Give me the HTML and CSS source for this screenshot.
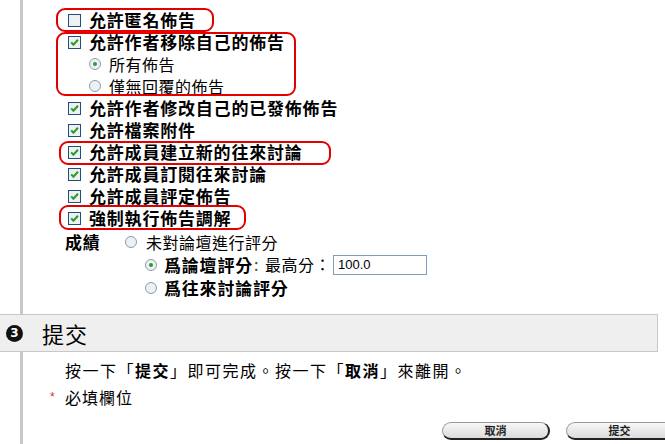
FILE: index.html
```html
<!DOCTYPE html>
<html lang="zh-Hant">
<head>
<meta charset="utf-8">
<title>論壇設定</title>
<link rel="stylesheet" href="styles.css">
</head>
<body>
<div class="panel top">
  <div class="row b"><svg class="cb" viewBox="0 0 13 13"><rect x="0.5" y="0.5" width="12" height="12" fill="#eef0f2" stroke="#1f4f7a"/></svg>允許匿名佈告</div>
  <div class="row b"><svg class="cb" viewBox="0 0 13 13"><rect x="0.5" y="0.5" width="12" height="12" fill="#eef0f2" stroke="#1f4f7a"/><path d="M3.2 6.4l2.2 2.4 4.6-5" stroke="#22a022" stroke-width="2" fill="none"/></svg>允許作者移除自己的佈告</div>
  <div class="row sub"><svg class="rd" viewBox="0 0 12 12"><circle cx="6" cy="6" r="5.5" fill="#eef1f4" stroke="#8a9bb0"/><circle cx="6" cy="6" r="2" fill="#2f9a2f"/></svg>所有佈告</div>
  <div class="row sub"><svg class="rd" viewBox="0 0 12 12"><circle cx="6" cy="6" r="5.5" fill="#eef1f4" stroke="#8a9bb0"/></svg>僅無回覆的佈告</div>
  <div class="row b"><svg class="cb" viewBox="0 0 13 13"><rect x="0.5" y="0.5" width="12" height="12" fill="#eef0f2" stroke="#1f4f7a"/><path d="M3.2 6.4l2.2 2.4 4.6-5" stroke="#22a022" stroke-width="2" fill="none"/></svg>允許作者修改自己的已發佈佈告</div>
  <div class="row b"><svg class="cb" viewBox="0 0 13 13"><rect x="0.5" y="0.5" width="12" height="12" fill="#eef0f2" stroke="#1f4f7a"/><path d="M3.2 6.4l2.2 2.4 4.6-5" stroke="#22a022" stroke-width="2" fill="none"/></svg>允許檔案附件</div>
  <div class="row b"><svg class="cb" viewBox="0 0 13 13"><rect x="0.5" y="0.5" width="12" height="12" fill="#eef0f2" stroke="#1f4f7a"/><path d="M3.2 6.4l2.2 2.4 4.6-5" stroke="#22a022" stroke-width="2" fill="none"/></svg>允許成員建立新的往來討論</div>
  <div class="row b"><svg class="cb" viewBox="0 0 13 13"><rect x="0.5" y="0.5" width="12" height="12" fill="#eef0f2" stroke="#1f4f7a"/><path d="M3.2 6.4l2.2 2.4 4.6-5" stroke="#22a022" stroke-width="2" fill="none"/></svg>允許成員訂閱往來討論</div>
  <div class="row b"><svg class="cb" viewBox="0 0 13 13"><rect x="0.5" y="0.5" width="12" height="12" fill="#eef0f2" stroke="#1f4f7a"/><path d="M3.2 6.4l2.2 2.4 4.6-5" stroke="#22a022" stroke-width="2" fill="none"/></svg>允許成員評定佈告</div>
  <div class="row b"><svg class="cb" viewBox="0 0 13 13"><rect x="0.5" y="0.5" width="12" height="12" fill="#eef0f2" stroke="#1f4f7a"/><path d="M3.2 6.4l2.2 2.4 4.6-5" stroke="#22a022" stroke-width="2" fill="none"/></svg>強制執行佈告調解</div>

  <div class="grade">
    <div class="grade-label">成績</div>
    <div class="grade-opts">
      <div class="row g1"><svg class="rd" viewBox="0 0 12 12"><circle cx="6" cy="6" r="5.5" fill="#eef1f4" stroke="#8a9bb0"/></svg>未對論壇進行評分</div>
      <div class="row g2"><svg class="rd" viewBox="0 0 12 12"><circle cx="6" cy="6" r="5.5" fill="#eef1f4" stroke="#8a9bb0"/><circle cx="6" cy="6" r="2" fill="#2f9a2f"/></svg><span class="bt">爲論壇評分</span><span class="colon">:</span><span class="mx">最高分：</span><span class="inp">100.0</span></div>
      <div class="row g2"><svg class="rd" viewBox="0 0 12 12"><circle cx="6" cy="6" r="5.5" fill="#eef1f4" stroke="#8a9bb0"/></svg><span class="bt">爲往來討論評分</span></div>
    </div>
  </div>
</div>

<div class="band">
  <span class="num">3</span>
  <span class="band-title">提交</span>
</div>

<div class="panel bottom">
  <p class="note">按一下「<b>提交</b>」即可完成。按一下「<b>取消</b>」來離開。</p>
  <p class="req"><span class="star">*</span>必填欄位</p>
  <div class="buttons">
    <span class="btn">取消</span>
    <span class="btn">提交</span>
  </div>
</div>

<div class="mark m1"></div>
<div class="mark m2"></div>
<div class="mark m3"></div>
<div class="mark m4"></div>
</body>
</html>
```

FILE: styles.css
```css
html, body {
  margin: 0;
  padding: 0;
  background: #fff;
}
body {
  position: relative;
  width: 665px;
  height: 444px;
  overflow: hidden;
  font-family: "Noto Sans CJK TC", "Noto Sans", sans-serif;
  color: #000;
}
.panel {
  margin-left: 20px;
  border-left: 3px solid #c8c8c8;
}
.panel.top {
  padding: 9px 0 0 45px;
  box-sizing: border-box;
  height: 314px;
}
.row {
  display: flex;
  align-items: center;
  height: 22px;
  line-height: 22px;
  font-size: 16px;
  letter-spacing: 0.5px;
  white-space: nowrap;
}
.row.b {
  font-weight: 700;
  font-size: 17px;
  letter-spacing: 0.8px;
}
.cb {
  width: 13px;
  height: 13px;
  flex: none;
  margin-right: 8px;
}
.rd {
  width: 12px;
  height: 12px;
  flex: none;
  margin-right: 8px;
}
.row.sub {
  padding-left: 21px;
}
.grade {
  display: flex;
  margin-left: -3px;
  margin-top: 2px;
}
.grade-label {
  width: 60px;
  height: 22px;
  line-height: 22px;
  font-weight: 700;
  font-size: 17px;
  letter-spacing: 0.8px;
}
.row.g1 .rd { margin-right: 9px; }
.row.g2 {
  padding-left: 20px;
  height: 23px;
  line-height: 23px;
}
.row.g2 .rd { margin-right: 7px; }
.bt {
  font-weight: 700;
  font-size: 17px;
  letter-spacing: 0.8px;
}
.colon {
  margin: 0 6px 0 1px;
  color: #444;
}
.mx {
  margin-right: 2px;
}
.inp {
  display: inline-block;
  width: 88px;
  height: 18px;
  line-height: 18px;
  border: 1px solid #7f9db9;
  padding-left: 4px;
  font-family: "Liberation Sans", Arial, sans-serif;
  font-size: 13px;
  letter-spacing: 0;
  background: #fff;
}
.band {
  display: flex;
  align-items: center;
  width: 657px;
  height: 36px;
  background: #efefef;
  border: 1px solid #c8c8c8;
  border-left: none;
}
.num {
  width: 17px;
  height: 17px;
  margin-left: 6px;
  border-radius: 50%;
  background: #111;
  color: #fff;
  font-family: "DejaVu Sans", sans-serif;
  font-weight: 700;
  font-size: 12px;
  line-height: 17px;
  text-align: center;
}
.band-title {
  margin-left: 19px;
  font-size: 22px;
  line-height: 36px;
  letter-spacing: 1px;
}
.panel.bottom {
  padding: 7px 0 0 42px;
  height: 85px;
}
.note {
  margin: 0;
  height: 22px;
  line-height: 22px;
  font-size: 16px;
  letter-spacing: 1.5px;
  white-space: nowrap;
}
.note b {
  font-weight: 700;
}
.req {
  margin: 5px 0 0 -15px;
  height: 22px;
  line-height: 22px;
  font-size: 16px;
  letter-spacing: 1px;
  display: flex;
  align-items: center;
}
.star {
  color: #d03030;
  font-size: 12px;
  width: 15px;
  font-family: "Liberation Sans", sans-serif;
}
.buttons {
  display: flex;
  gap: 16px;
  margin-top: 14px;
  padding-left: 377px;
}
.btn {
  flex: none;
  width: 105px;
  height: 15px;
  line-height: 15px;
  text-align: center;
  font-size: 11px;
  font-weight: 700;
  color: #222;
  background: linear-gradient(#f7f7f7, #dcdcdc);
  border: 1px solid #9a9a9a;
  border-right: 2px solid #222;
  border-bottom: 2px solid #222;
  border-radius: 9px;
}
.mark {
  position: absolute;
  border: 2px solid #e30000;
  border-radius: 9px;
}
.m1 { left: 56px; top: 8px; width: 154px; height: 20px; }
.m2 { left: 56px; top: 32px; width: 236px; height: 60px; }
.m3 { left: 59px; top: 141px; width: 268px; height: 20px; }
.m4 { left: 59px; top: 205px; width: 183px; height: 21px; }
```
